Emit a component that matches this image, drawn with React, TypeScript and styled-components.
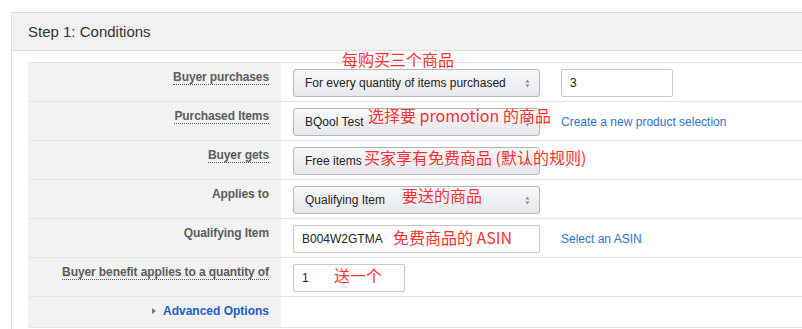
import React from 'react';
import styled, { createGlobalStyle } from 'styled-components';

const GlobalStyle = createGlobalStyle`
  html, body {
    margin: 0;
    padding: 0;
    background: #fff;
    overflow: hidden;
  }
  body {
    font-family: "Liberation Sans", Arial, sans-serif;
    font-size: 12px;
    color: #333;
  }
`;

const Panel = styled.div`
  margin: 12px 0 0 11px;
  border: 1px solid #ddd;
  border-right: none;
  border-bottom: none;
  height: 316px;
  overflow: hidden;
`;

const PanelHeader = styled.div`
  height: 37px;
  line-height: 37px;
  padding-left: 16px;
  background: #f2f2f2;
  border-bottom: 1px solid #ddd;
  font-size: 15px;
  color: #333;
`;

const PanelBody = styled.div`
  padding: 11px 0 0 16px;
`;

const Table = styled.div`
  border-top: 1px solid #e3e3e3;
  border-bottom: 1px solid #e3e3e3;
`;

const Row = styled.div<{ $short?: boolean }>`
  display: grid;
  grid-template-columns: 253px 1fr;
  height: ${(p) => (p.$short ? 30 : 38)}px;
  & + & {
    border-top: 1px solid #e3e3e3;
  }
`;

const LabelCell = styled.div`
  background: #f2f2f2;
  text-align: right;
  padding: 7px 12px 0 0;
  line-height: 14px;
`;

const Label = styled.span<{ $hint?: boolean }>`
  font-weight: bold;
  color: #5c5c5c;
  letter-spacing: -0.1px;
  border-bottom: ${(p) => (p.$hint ? '1px dotted #555' : 'none')};
`;

const ValueCell = styled.div`
  position: relative;
  display: flex;
  align-items: center;
  gap: 21px;
  height: 28px;
  padding: 6px 0 0 12px;
`;

const Select = styled.div<{ $w?: number }>`
  box-sizing: border-box;
  width: ${(p) => p.$w ?? 247}px;
  height: 28px;
  display: flex;
  align-items: center;
  justify-content: space-between;
  padding: 0 9px 0 11px;
  border: 1px solid #b4b6b9;
  border-radius: 3px;
  background: linear-gradient(#f7f8fa, #e6e8eb);
  color: #222;
  font-size: 12px;
`;

const Input = styled.div<{ $w?: number }>`
  box-sizing: border-box;
  width: ${(p) => p.$w ?? 247}px;
  height: 28px;
  display: flex;
  align-items: center;
  padding-left: 8px;
  border: 1px solid #c8c8c8;
  border-radius: 2px;
  background: #fff;
  color: #222;
  font-size: 12px;
`;

const Link = styled.a<{ $bold?: boolean }>`
  color: ${(p) => (p.$bold ? '#1a5fc4' : '#2f72c9')};
  font-weight: ${(p) => (p.$bold ? 'bold' : 'normal')};
  font-size: 12px;
  text-decoration: none;
  cursor: pointer;
`;

const Caret = styled.span`
  display: inline-block;
  width: 0;
  height: 0;
  margin-right: 7px;
  vertical-align: 1px;
  border-top: 3px solid transparent;
  border-bottom: 3px solid transparent;
  border-left: 4px solid #777;
`;

const Note = styled.span<{ $x: number; $y: number }>`
  position: absolute;
  left: ${(p) => p.$x}px;
  top: ${(p) => p.$y}px;
  font-family: "Noto Sans CJK SC", "Liberation Sans", sans-serif;
  font-size: 16px;
  line-height: 16px;
  color: #ff3030;
  white-space: nowrap;
  pointer-events: none;
`;

const Arrows = () => (
  <svg width="5" height="9" viewBox="0 0 5 9">
    <path d="M2.5 0.5 L4.5 3.5 L0.5 3.5 Z" fill="#8a8a8a" />
    <path d="M2.5 8.5 L4.5 5.5 L0.5 5.5 Z" fill="#8a8a8a" />
  </svg>
);

export default function App() {
  return (
    <>
      <GlobalStyle />
      <Panel>
        <PanelHeader>Step 1: Conditions</PanelHeader>
        <PanelBody>
          <Table>
            <Row>
              <LabelCell>
                <Label $hint>Buyer purchases</Label>
              </LabelCell>
              <ValueCell>
                <Select>
                  For every quantity of items purchased
                  <Arrows />
                </Select>
                <Input $w={112}>3</Input>
                <Note $x={61} $y={-12}>每购买三个商品</Note>
              </ValueCell>
            </Row>
            <Row>
              <LabelCell>
                <Label $hint>Purchased Items</Label>
              </LabelCell>
              <ValueCell>
                <Select>
                  BQool Test
                  <Arrows />
                </Select>
                <Link>Create a new product selection</Link>
                <Note $x={87} $y={5}>选择要 promotion 的商品</Note>
              </ValueCell>
            </Row>
            <Row>
              <LabelCell>
                <Label $hint>Buyer gets</Label>
              </LabelCell>
              <ValueCell>
                <Select>
                  Free items
                  <Arrows />
                </Select>
                <Note $x={83} $y={8}>买家享有免费商品 (默认的规则)</Note>
              </ValueCell>
            </Row>
            <Row>
              <LabelCell>
                <Label>Applies to</Label>
              </LabelCell>
              <ValueCell>
                <Select>
                  Qualifying Item
                  <Arrows />
                </Select>
                <Note $x={121} $y={7}>要送的商品</Note>
              </ValueCell>
            </Row>
            <Row>
              <LabelCell>
                <Label>Qualifying Item</Label>
              </LabelCell>
              <ValueCell>
                <Input>B004W2GTMA</Input>
                <Link>Select an ASIN</Link>
                <Note $x={112} $y={10}>免费商品的 ASIN</Note>
              </ValueCell>
            </Row>
            <Row>
              <LabelCell>
                <Label $hint>Buyer benefit applies to a quantity of</Label>
              </LabelCell>
              <ValueCell>
                <Input $w={112}>1</Input>
                <Note $x={53} $y={9}>送一个</Note>
              </ValueCell>
            </Row>
            <Row $short>
              <LabelCell>
                <Link $bold>
                  <Caret />
                  Advanced Options
                </Link>
              </LabelCell>
              <div />
            </Row>
          </Table>
        </PanelBody>
      </Panel>
    </>
  );
}
